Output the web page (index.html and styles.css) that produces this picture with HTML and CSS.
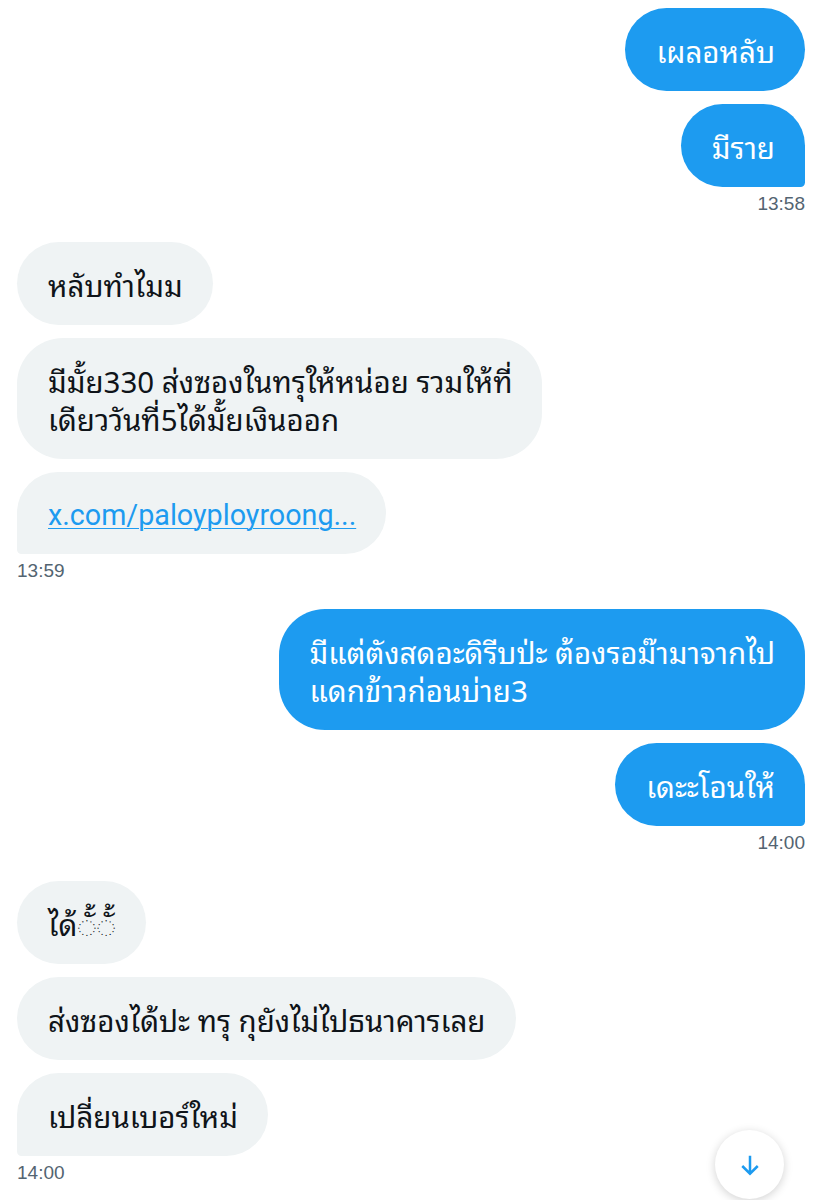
FILE: index.html
```html
<!DOCTYPE html>
<html lang="th">
<head>
    <meta charset="UTF-8">
    <title>Messages</title>
    <link rel="stylesheet" href="styles.css">
</head>
<body>
    <div class="chat">
        <div class="group out">
            <div class="msg">เผลอหลับ</div>
            <div class="msg last">มีราย</div>
            <div class="time">13:58</div>
        </div>
        <div class="group in">
            <div class="msg">หลับทำไมม</div>
            <div class="msg">มีมั้ย330 ส่งซองในทรุให้หน่อย รวมให้ที่<br>เดียววันที่5ได้มั้ยเงินออก</div>
            <div class="msg url last"><a class="link" href="#">x.com/paloyployroong...</a></div>
            <div class="time">13:59</div>
        </div>
        <div class="group out">
            <div class="msg">มีแต่ตังสดอะดิรีบป่ะ ต้องรอม๊ามาจากไป<br>แดกข้าวก่อนบ่าย3</div>
            <div class="msg last">เดะะโอนให้</div>
            <div class="time">14:00</div>
        </div>
        <div class="group in">
            <div class="msg">ได้◌ั้◌ั้</div>
            <div class="msg">ส่งซองได้ปะ ทรุ กุยังไม่ไปธนาคารเลย</div>
            <div class="msg last">เปลี่ยนเบอร์ใหม่</div>
            <div class="time">14:00</div>
        </div>
    </div>

    <button type="button" class="scroll-down">
        <svg viewBox="0 0 24 24" width="30" height="30">
            <path d="M12 4.5v14.5M5.8 12.8L12 19l6.2-6.2" fill="none" stroke="#1d9bf0" stroke-width="2"/>
        </svg>
    </button>
</body>
</html>
```

FILE: styles.css
```css
* { margin:0; padding:0; box-sizing:border-box; }
body {
    background-color:#ffffff;
    font-family:"Noto Sans Thai Looped", "Noto Sans", "DejaVu Sans", sans-serif;
    color:#0f1419;
}
.chat {
    padding:8px 17px 0 17px;
}
.group {
    display:flex;
    flex-direction:column;
    margin-bottom:26px;
}
.group.out { align-items:flex-end; }
.group.in { align-items:flex-start; }
.msg {
    font-size:29.5px;
    line-height:38px;
    padding:23px 30px 22px 31px;
    border-radius:46px;
    margin-bottom:13px;
    white-space:nowrap;
}
.out .msg {
    background-color:#1d9bf0;
    color:#ffffff;
}
.in .msg {
    background-color:#eff3f4;
}
.msg.last { margin-bottom:5px; }
.out .msg.last { border-bottom-right-radius:5px; }
.in .msg.last { border-bottom-left-radius:5px; }
.msg.url {
    line-height:34px;
    padding-right:30px;
}
.link {
    font-family:Roboto, "Noto Sans", sans-serif;
    font-size:28.7px;
    color:#1d9bf0;
    text-decoration:underline;
    text-decoration-thickness:1px;
    text-underline-offset:3px;
}
.time {
    font-size:19px;
    line-height:24px;
    color:#536471;
    font-family:"Liberation Sans", Arial, sans-serif;
}
.scroll-down {
    position:fixed;
    right:38px;
    bottom:1px;
    width:69px;
    height:69px;
    border:none;
    border-radius:50%;
    background-color:#ffffff;
    box-shadow:0 2px 10px rgba(0,0,0,0.18);
    display:flex;
    align-items:center;
    justify-content:center;
    cursor:pointer;
}
```
